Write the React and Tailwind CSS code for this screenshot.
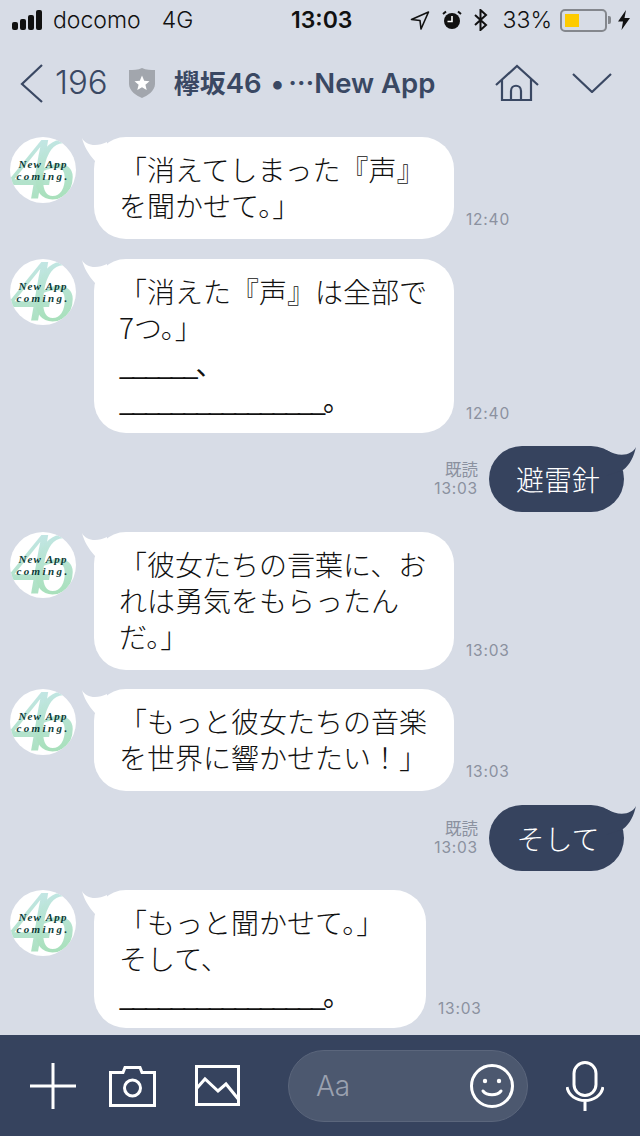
import React from "react";

const JP = { fontFamily: '"Noto Sans CJK JP", sans-serif' };

function Avatar() {
  return (
    <div className="relative w-[66px] h-[66px] shrink-0 rounded-full bg-white overflow-hidden font-['Liberation_Serif',serif]">
      <span className="absolute left-[-2px] top-[-8px] text-[88px] leading-[80px] italic bg-gradient-to-b from-[#c6e7ea] to-[#a9e0bc] bg-clip-text text-transparent">
        4
      </span>
      <span className="absolute left-[22px] top-[-8px] text-[88px] leading-[80px] italic bg-gradient-to-b from-[#c6e7ea] to-[#a4dfb4] bg-clip-text text-transparent">
        6
      </span>
      <div className="absolute left-0 right-0 top-[21px] text-center text-[#0d3b36] text-[11px] leading-[12px] italic font-bold">
        <div className="tracking-[1.2px]">New App</div>
        <div className="tracking-[2.4px]">coming.</div>
      </div>
    </div>
  );
}

function Received({ time, width, mt, lines }) {
  return (
    <div className="flex items-end pl-[10px]" style={{ marginTop: mt }}>
      <div className="self-start">
        <Avatar />
      </div>
      <div
        className="relative ml-[18px] bg-white rounded-[32px] pl-[25px] pt-[14px] pb-[16px] text-[28px] leading-[36px] font-light text-[#111]"
        style={{ ...JP, width }}
      >
        <svg className="absolute left-[-12px] top-0 w-[30px] h-[30px]" viewBox="-12 0 30 30">
          <path d="M-12 1C-8 9 3 10 13 5L13 30L1 24C-6 16-10 9-12 1Z" fill="#fff" />
        </svg>
        {lines.map((l) => (
          <div key={l} className={l.includes("_") ? "whitespace-nowrap tracking-[-2.9px] font-normal" : "whitespace-nowrap"}>
            {l}
          </div>
        ))}
      </div>
      <span className="ml-[12px] mb-[10px] text-[15.5px] leading-[18px] tracking-[0.8px] text-[#8b919f] font-['Inter',sans-serif]">
        {time}
      </span>
    </div>
  );
}

function Sent({ text, mt }) {
  return (
    <div className="flex items-center justify-end pr-[16px]" style={{ marginTop: mt }}>
      <div className="mr-[11px] text-right text-[15.5px] leading-[20px] tracking-[0.8px] text-[#8b919f] font-['Inter',sans-serif]">
        <div className="text-[16.5px] tracking-normal" style={JP}>既読</div>
        <div>13:03</div>
      </div>
      <div
        className="relative w-[135px] h-[66px] flex items-center justify-center bg-[#36435e] rounded-[33px] text-white text-[28px] font-light"
        style={JP}
      >
        <svg className="absolute right-[-12px] top-0 w-[30px] h-[30px]" viewBox="-18 0 30 30">
          <path d="M12 1C8 9-4 12-18 4L-18 30L-1 24C6 19 10 10 12 1Z" fill="#36435e" />
        </svg>
        <span className="relative ml-[3px]">{text}</span>
      </div>
    </div>
  );
}

function StatusBar() {
  return (
    <div className="relative h-[40px] flex items-center pl-[12px] pr-[10px] text-[#111] font-['Inter',sans-serif]">
      <div className="flex items-end gap-[2px] h-[20px]">
        <div className="w-[6px] h-[8px] rounded-[2px] bg-[#111]" />
        <div className="w-[6px] h-[11px] rounded-[2px] bg-[#111]" />
        <div className="w-[6px] h-[15px] rounded-[2px] bg-[#111]" />
        <div className="w-[6px] h-[20px] rounded-[2px] bg-[#111]" />
      </div>
      <span className="ml-[11px] text-[23px] font-light">docomo</span>
      <span className="ml-[21px] text-[23px] font-light">4G</span>
      <span className="absolute left-[291px] text-[23px] font-semibold">13:03</span>
      <div className="ml-auto flex items-center">
        <svg width="20" height="20" viewBox="0 0 20 20" fill="none" stroke="#111" strokeWidth="1.6" strokeLinejoin="round">
          <path d="M1.5 9.5L18.5 2L11 19L10 10.5Z" />
        </svg>
        <svg className="ml-[12px]" width="20" height="20" viewBox="0 0 20 20">
          <circle cx="10" cy="11" r="8" fill="#111" />
          <path d="M10 6V11.5H5.5" stroke="#fff" strokeWidth="1.6" fill="none" />
          <path d="M1 4L4 1.5M19 4L16 1.5" stroke="#111" strokeWidth="2" />
        </svg>
        <svg className="ml-[11px]" width="15" height="22" viewBox="0 0 15 22" fill="none" stroke="#111" strokeWidth="2">
          <path d="M2 6L13 16L7.5 21V1L13 6L2 16" />
        </svg>
        <span className="ml-[15px] text-[23px] font-light">33%</span>
        <div className="ml-[8px] w-[47px] h-[23px] rounded-[5px] border-2 border-[#84878d] p-[3px]">
          <div className="w-[14px] h-full bg-[#fecb00]" />
        </div>
        <div className="ml-[1px] w-[3px] h-[8px] rounded-r-[2px] bg-[#84878d]" />
        <svg className="ml-[7px]" width="12" height="20" viewBox="0 0 12 20">
          <path d="M8 0L0 11.5H5L3.5 20L12 8H6.5Z" fill="#111" />
        </svg>
      </div>
    </div>
  );
}

function Header() {
  return (
    <div className="relative h-[85px] flex items-center pl-[20px] text-[#3a4863]">
      <svg width="24" height="40" viewBox="0 0 24 40" fill="none" stroke="#3a4863" strokeWidth="2.2" className="mt-[1px]">
        <path d="M22 2L2 21L22 39" />
      </svg>
      <span className="ml-[11px] text-[33px] font-light font-['Inter',sans-serif]">196</span>
      <svg className="ml-[21px]" width="26" height="30" viewBox="0 0 26 30">
        <path d="M13 0C17 2 22 2 26 2V16C26 23 18 28 13 30C8 28 0 23 0 16V2C4 2 9 2 13 0Z" fill="#a2a6ad" />
        <path d="M13 7.5L15.2 12.8L20.5 13.2L16.4 16.8L17.7 22L13 19.2L8.3 22L9.6 16.8L5.5 13.2L10.8 12.8Z" fill="#fff" />
      </svg>
      <span className="ml-[19px] mt-[2px] text-[27.5px] font-semibold whitespace-nowrap font-['Inter','Noto_Sans_CJK_JP',sans-serif]">
        <span className="text-[26px]">欅坂</span>46<span className="ml-[2px]"> • </span>
        <span className="ml-[-3px] text-[26px]" style={JP}>…</span>New App
      </span>
      <div className="ml-auto flex items-center pr-[28px]">
        <svg width="44" height="38" viewBox="0 0 44 38" fill="none" stroke="#3a4863" strokeWidth="2.2">
          <path d="M1 21L22 2L43 21M7 15V36H36V15M16 36V27C16 20 26 20 26 27V36" />
        </svg>
        <svg className="ml-[33px]" width="40" height="20" viewBox="0 0 40 20" fill="none" stroke="#3a4863" strokeWidth="2.2">
          <path d="M1 1L20 19L39 1" />
        </svg>
      </div>
    </div>
  );
}

function Footer() {
  return (
    <div className="mt-auto h-[101px] flex items-center bg-[#36435e] pl-[30px]">
      <svg width="46" height="46" viewBox="0 0 46 46" stroke="#fff" strokeWidth="3">
        <path d="M0 23H46M23 0V46" />
      </svg>
      <svg className="ml-[33px]" width="47" height="42" viewBox="0 0 47 42" fill="none" stroke="#fff" strokeWidth="3">
        <path d="M1.5 40.5V7.5H14L16 2.5H31L33 7.5H45.5V40.5Z" />
        <circle cx="23.5" cy="23" r="8" />
      </svg>
      <svg className="ml-[39px]" width="45" height="41" viewBox="0 0 45 41" fill="none" stroke="#fff" strokeWidth="3">
        <path d="M1.5 1.5H43.5V39.5H1.5Z" />
        <path d="M2 23L10 14L23 26L31 19L44 35" />
      </svg>
      <div className="ml-[48px] w-[240px] h-[72px] flex items-center justify-between rounded-[36px] bg-[#4c586f] border border-[#5b667c] pl-[27px] pr-[13px]">
        <span className="text-[28px] font-light text-[#9aa1b0] font-['Inter',sans-serif]">Aa</span>
        <svg width="44" height="44" viewBox="0 0 44 44" fill="none" stroke="#fff" strokeWidth="3">
          <circle cx="22" cy="22" r="20.5" />
          <path d="M13 27C17 32 27 32 31 27" strokeLinecap="round" />
          <circle cx="15" cy="17" r="2.2" fill="#fff" stroke="none" />
          <circle cx="29" cy="17" r="2.2" fill="#fff" stroke="none" />
        </svg>
      </div>
      <svg className="ml-[38px]" width="38" height="50" viewBox="0 0 38 50" fill="none" stroke="#fff" strokeWidth="3">
        <rect x="8" y="1.5" width="22" height="33" rx="11" />
        <path d="M1 26C4 44 34 44 37 26M19 40V50" />
      </svg>
    </div>
  );
}

export default function App() {
  return (
    <div className="w-[640px] h-[1136px] flex flex-col overflow-hidden bg-[#d7dce6]">
      <StatusBar />
      <Header />
      <div className="pt-[12px]">
        <Received time="12:40" width={360} mt={0} lines={["「消えてしまった『声』", "を聞かせて。」"]} />
        <Received time="12:40" width={360} mt={20} lines={["「消えた『声』は全部で", "7つ。」", "______、", "________________。"]} />
        <Sent text="避雷針" mt={13} />
        <Received time="13:03" width={360} mt={20} lines={["「彼女たちの言葉に、お", "れは勇気をもらったん", "だ。」"]} />
        <Received time="13:03" width={360} mt={19} lines={["「もっと彼女たちの音楽", "を世界に響かせたい！」"]} />
        <Sent text="そして" mt={14} />
        <Received time="13:03" width={332} mt={19} lines={["「もっと聞かせて。」", "そして、", "________________。"]} />
      </div>
      <Footer />
    </div>
  );
}
